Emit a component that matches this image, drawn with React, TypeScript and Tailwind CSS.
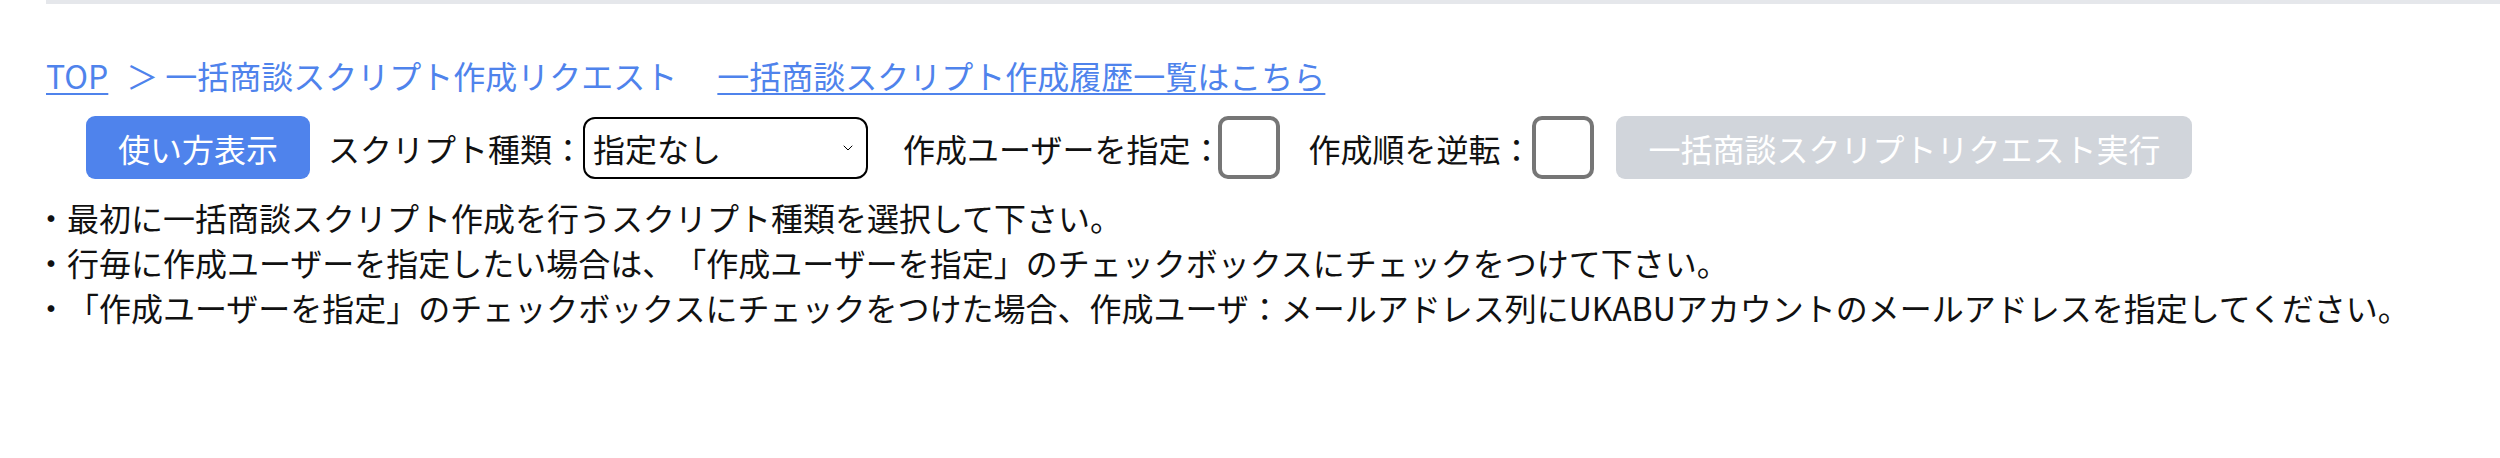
import { ChevronDown } from "lucide-react";

const font = { fontFamily: '"Noto Sans CJK JP", "Noto Sans", sans-serif' };

const notes = [
  "・最初に一括商談スクリプト作成を行うスクリプト種類を選択して下さい。",
  "・行毎に作成ユーザーを指定したい場合は、「作成ユーザーを指定」のチェックボックスにチェックをつけて下さい。",
  "・「作成ユーザーを指定」のチェックボックスにチェックをつけた場合、作成ユーザ：メールアドレス列にUKABUアカウントのメールアドレスを指定してください。",
];

function Checkbox() {
  return <div className="w-[62px] h-[63px] shrink-0 rounded-[10px] border-[4px] border-[#767676] bg-white" />;
}

export default function App() {
  return (
    <div
      className="w-[2500px] h-[458px] bg-white text-[32px] text-[#111] pl-[46px] [text-spacing-trim:space-all]"
      style={font}
    >
      <div className="h-[4px] bg-[#e5e7eb]" />

      {/* breadcrumb */}
      <div className="mt-[51px] flex items-center leading-[40px] text-[#4f83ec] whitespace-nowrap">
        <a href="#" className="underline underline-offset-[4px] decoration-[2px]">TOP</a>
        <span className="ml-[18px]">＞</span>
        <span className="ml-[7px]">一括商談スクリプト作成リクエスト</span>
        <a href="#" className="ml-[40px] underline underline-offset-[4px] decoration-[2px]">一括商談スクリプト作成履歴一覧はこちら</a>
      </div>

      {/* controls */}
      <div className="mt-[21px] ml-[40px] flex items-center whitespace-nowrap">
        <button className="w-[224px] h-[63px] rounded-[9px] bg-[#4f83ec] text-white leading-none">使い方表示</button>
        <span className="ml-[18px]">スクリプト種類：</span>
        <div className="w-[285px] h-[62px] -ml-[1px] rounded-[12px] border-[2px] border-black flex items-center justify-between pl-[8px] pr-[10px]">
          <span>指定なし</span>
          <ChevronDown className="w-[16px] h-[16px] text-black" strokeWidth={1.5} />
        </div>
        <span className="ml-[35px]">作成ユーザーを指定：</span>
        <div className="-ml-[4px]"><Checkbox /></div>
        <span className="ml-[28px]">作成順を逆転：</span>
        <Checkbox />
        <button disabled className="ml-[22px] w-[576px] h-[63px] rounded-[9px] bg-[#d1d5db] text-white leading-none">
          一括商談スクリプトリクエスト実行
        </button>
      </div>

      {/* notes */}
      <div className="mt-[16px] -ml-[11px] leading-[45px] whitespace-nowrap">
        {notes.map((n) => (
          <p key={n}>{n}</p>
        ))}
      </div>
    </div>
  );
}
